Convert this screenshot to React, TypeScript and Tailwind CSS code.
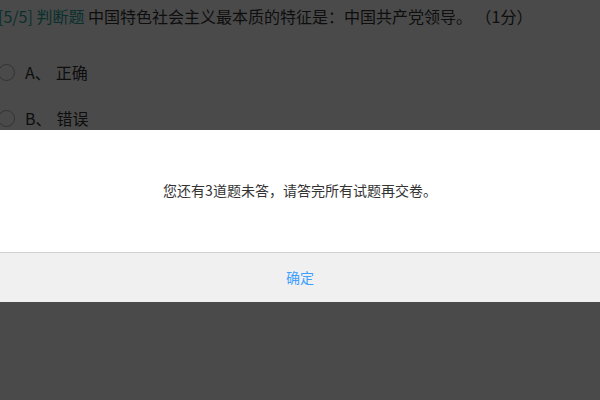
const FONT = { fontFamily: '"Noto Sans CJK SC", "Microsoft YaHei", sans-serif' };

const OPTIONS = [
  { key: 'A', label: '正确' },
  { key: 'B', label: '错误' },
];

function Question() {
  return (
    <div className="-ml-[2px] pt-[4px] text-[#333]">
      <p className="text-[16px] leading-[24px]">
        <span className="text-[#1fa59b]">[5/5] 判断题</span> 中国特色社会主义最本质的特征是：中国共产党领导。 （1分）
      </p>
      <ul className="mt-[32px] flex flex-col gap-[22px]">
        {OPTIONS.map((o) => (
          <li key={o.key} className="flex h-[24px] items-center text-[16px]">
            <span className="h-[17px] w-[17px] shrink-0 rounded-full border border-[#aaa] bg-white" />
            <span className="ml-[10px]">{o.key}、</span>
            <span className="ml-[5px]">{o.label}</span>
          </li>
        ))}
      </ul>
    </div>
  );
}

function AlertDialog() {
  return (
    <div className="absolute inset-0 bg-[rgba(0,0,0,0.71)]">
      <div className="mt-[130px] w-full bg-white">
        <div className="flex h-[122px] items-center justify-center pb-[2px] text-[14px] text-[#333]">
          您还有3道题未答，请答完所有试题再交卷。
        </div>
        <button className="flex h-[50px] w-full items-center justify-center border-t border-[#d0d0d0] bg-[#f0f0f0] text-[14px] text-[#40a0ff]">
          确定
        </button>
      </div>
    </div>
  );
}

export default function App() {
  return (
    <div className="relative h-[400px] w-[600px] overflow-hidden bg-white" style={FONT}>
      <Question />
      <AlertDialog />
    </div>
  );
}
